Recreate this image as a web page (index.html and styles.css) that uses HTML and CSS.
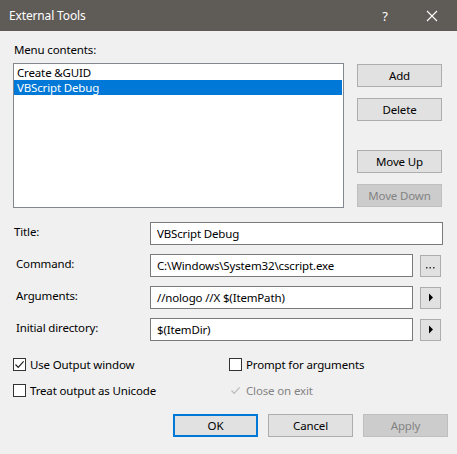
FILE: index.html
```html
<!DOCTYPE html>
<html>
<head>
<meta charset="utf-8">
<link rel="stylesheet" href="styles.css">
</head>
<body>
<div class="dialog">
  <div class="titlebar">
    <span class="title">External Tools</span>
    <span class="help">?</span>
    <span class="close"><svg width="12" height="12" viewBox="0 0 12 12"><path d="M1 1L11 11M11 1L1 11" stroke="#fff" stroke-width="1.1" fill="none"/></svg></span>
  </div>
  <div class="body">
    <div class="menu-label">Menu contents:</div>
    <div class="top">
      <div class="listbox">
        <div class="item">Create &amp;GUID</div>
        <div class="item sel">VBScript Debug</div>
      </div>
      <div class="side">
        <div class="btn">Add</div>
        <div class="btn">Delete</div>
        <div class="btn spaced">Move Up</div>
        <div class="btn disabled">Move Down</div>
      </div>
    </div>
    <div class="form">
      <div class="lbl lbl-title">Title:</div>
      <div class="field wide"><div class="input">VBScript Debug</div></div>
      <div class="lbl">Command:</div>
      <div class="field"><div class="input">C:\Windows\System32\cscript.exe</div><div class="mini dots"><svg width="9" height="3" viewBox="0 0 9 3"><rect x="0" y="1" width="1.5" height="1.5" fill="#333"/><rect x="3.5" y="1" width="1.5" height="1.5" fill="#333"/><rect x="7" y="1" width="1.5" height="1.5" fill="#333"/></svg></div></div>
      <div class="lbl">Arguments:</div>
      <div class="field"><div class="input">//nologo //X $(ItemPath)</div><div class="mini arrow"><svg width="6" height="9" viewBox="0 0 6 9"><path d="M1 0.5L5 4.5L1 8.5Z" fill="#000"/></svg></div></div>
      <div class="lbl">Initial directory:</div>
      <div class="field"><div class="input">$(ItemDir)</div><div class="mini arrow"><svg width="6" height="9" viewBox="0 0 6 9"><path d="M1 0.5L5 4.5L1 8.5Z" fill="#000"/></svg></div></div>
    </div>
    <div class="checks">
      <div class="check"><span class="box"><svg width="11" height="11" viewBox="0 0 11 11"><path d="M1.5 5.5L4.2 8.3L9.6 2.3" stroke="#222" stroke-width="1.2" fill="none"/></svg></span>Use Output window</div>
      <div class="check"><span class="box"></span>Prompt for arguments</div>
      <div class="check"><span class="box"></span>Treat output as Unicode</div>
      <div class="check dis"><span class="box nobox"><svg width="11" height="11" viewBox="0 0 11 11"><path d="M1.5 5.5L4.2 8.3L9.6 2.3" stroke="#bcbcbc" stroke-width="1.2" fill="none"/></svg></span>Close on exit</div>
    </div>
    <div class="actions">
      <div class="btn default">OK</div>
      <div class="btn">Cancel</div>
      <div class="btn disabled">Apply</div>
    </div>
  </div>
</div>
</body>
</html>
```
FILE: styles.css
```css
* { box-sizing: border-box; }
html, body { margin: 0; padding: 0; }
body {
  width: 457px;
  height: 454px;
  background: #f0f0f0;
  font-family: "Noto Sans", "Open Sans", sans-serif;
  font-size: 11.5px;
  letter-spacing: -0.15px;
  color: #000;
  overflow: hidden;
}
.dialog { width: 457px; height: 454px; background: #f0f0f0; }
.titlebar {
  height: 31px;
  background: #5f5b57;
  color: #fff;
  display: flex;
  align-items: center;
  padding-left: 9px;
  font-size: 12px;
}
.title { flex: 1; padding-bottom: 1px; }
.help { width: 20px; margin-right: 31px; font-size: 13px; text-align: center; }
.close { width: 12px; height: 12px; margin-right: 19px; display: flex; }
.body { padding: 11px 0 0 13px; }
.menu-label { height: 16px; line-height: 16px; padding-left: 1px; margin-bottom: 5px; }
.top { display: flex; align-items: flex-start; }
.listbox {
  width: 331px;
  height: 145px;
  border: 1px solid #828790;
  background: #fff;
  padding: 1px 1px 0 0;
}
.item { height: 15px; line-height: 15px; padding-left: 3px; white-space: nowrap; }
.item.sel { background: #0078d7; color: #fff; }
.side { display: flex; flex-direction: column; margin-left: 13px; padding-top: 1px; gap: 11px; }
.btn {
  width: 85px;
  height: 23px;
  background: #e1e1e1;
  border: 1px solid #adadad;
  display: flex;
  align-items: center;
  justify-content: center;
  padding-bottom: 1px;
}
.btn.spaced { margin-top: 18px; }
.btn.disabled { background: #cccccc; border-color: #bfbfbf; color: #838383; }
.btn.default { border: 2px solid #0078d7; }
.form {
  display: grid;
  grid-template-columns: 137px 293px;
  row-gap: 9px;
  margin-top: 14px;
}
.lbl { height: 23px; padding: 2px 0 0 3px; line-height: 16px; }
.lbl-title { padding-left: 1px; }
.field { display: flex; align-items: center; gap: 7px; height: 23px; }
.input {
  width: 263px;
  height: 23px;
  border: 1px solid #7a7a7a;
  background: #fff;
  padding: 0 0 1px 6px;
  display: flex;
  align-items: center;
  white-space: nowrap;
}
.field.wide .input { width: 293px; }
.mini {
  width: 21px;
  height: 22px;
  background: #e1e1e1;
  border: 1px solid #adadad;
  display: flex;
  align-items: center;
  justify-content: center;
}
.mini.dots { padding-top: 3px; }
.checks {
  display: grid;
  grid-template-columns: 216px 200px;
  row-gap: 10px;
  margin-top: 15px;
}
.check { display: flex; align-items: center; height: 16px; white-space: nowrap; }
.box {
  width: 13px;
  height: 13px;
  border: 1px solid #333;
  background: #fff;
  margin-right: 4px;
  display: flex;
  align-items: center;
  justify-content: center;
  flex: none;
}
.box.nobox { background: #f0f0f0; border: none; }
.check.dis { color: #838383; }
.actions {
  display: flex;
  justify-content: flex-end;
  gap: 10px;
  margin-top: 16px;
  padding-right: 9px;
}
```
